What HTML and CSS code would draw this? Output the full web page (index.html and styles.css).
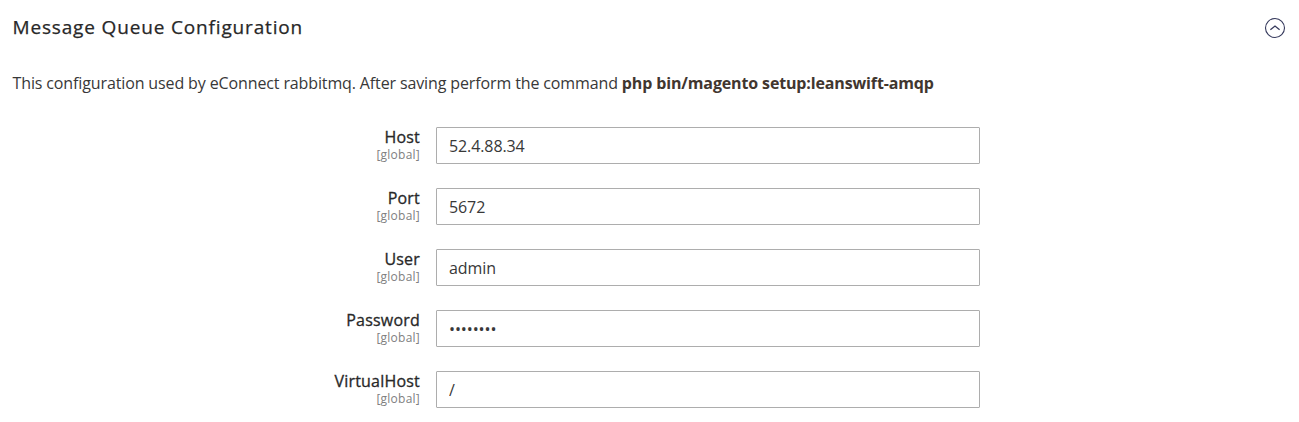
FILE: index.html
```html
<!DOCTYPE html>
<html lang="en">
<head>
<meta charset="utf-8">
<title>Message Queue Configuration</title>
<link rel="stylesheet" href="styles.css">
</head>
<body>
<section class="section">
  <header class="section-head">
    <h1 class="title">Message Queue Configuration</h1>
    <svg class="toggle" viewBox="0 0 22 22" width="22" height="22" fill="none" stroke="#35395c" stroke-width="1.1"><circle cx="11" cy="11" r="9.5"/><path d="M6.4 12.7 11 9l4.6 3.7" stroke-width="1.3"/></svg>
  </header>
  <p class="comment">This configuration used by eConnect rabbitmq. After saving perform the command <strong>php bin/magento setup:leanswift-amqp</strong></p>
  <form class="fields">
    <div class="field"><label class="label" for="host">Host<span class="scope">[global]</span></label><input class="input" id="host" type="text" value="52.4.88.34"></div>
    <div class="field"><label class="label" for="port">Port<span class="scope">[global]</span></label><input class="input" id="port" type="text" value="5672"></div>
    <div class="field"><label class="label" for="user">User<span class="scope">[global]</span></label><input class="input" id="user" type="text" value="admin"></div>
    <div class="field"><label class="label" for="password">Password<span class="scope">[global]</span></label><input class="input" id="password" type="password" value="abcdefgh"></div>
    <div class="field"><label class="label" for="vhost">VirtualHost<span class="scope">[global]</span></label><input class="input" id="vhost" type="text" value="/"></div>
  </form>
</section>
</body>
</html>
```
FILE: styles.css
```css
* { box-sizing: border-box; }
body { margin: 0; background: #fff; color: #303030; font-family: "Open Sans", "Noto Sans", sans-serif; }
.section { padding: 14px 13px 0 12.5px; }
.section-head { display: flex; align-items: center; justify-content: space-between; height: 28px; }
.title { margin: 0 0 2px; font-size: 19px; font-weight: 400; color: #282828; -webkit-text-stroke: .25px #282828; letter-spacing: .84px; line-height: 26px; }
.toggle { display: block; }
.comment { margin: 30px 0 0; font-size: 16px; line-height: 22px; letter-spacing: -.125px; white-space: nowrap; color: #383838; }
.comment strong { font-weight: 700; letter-spacing: -.14px; color: #41362f; }
.fields { display: grid; gap: 24px; margin-top: 33px; }
.field { display: grid; grid-template-columns: 407.5px 544px; column-gap: 16px; height: 37px; }
.label { display: block; text-align: right; font-size: 16px; font-weight: 400; color: #282828; -webkit-text-stroke: .3px #282828; letter-spacing: .2px; line-height: 20px; }
.scope { display: block; font-size: 12px; -webkit-text-stroke: 0; letter-spacing: .24px; line-height: 15px; color: #808080; }
.input { width: 544px; height: 37px; margin: 0; padding: 0 12px; border: 1px solid #adadad; border-radius: 1px; background: #fff; color: #383838; font-family: inherit; font-size: 16px; letter-spacing: -.1px; outline: none; }
```
